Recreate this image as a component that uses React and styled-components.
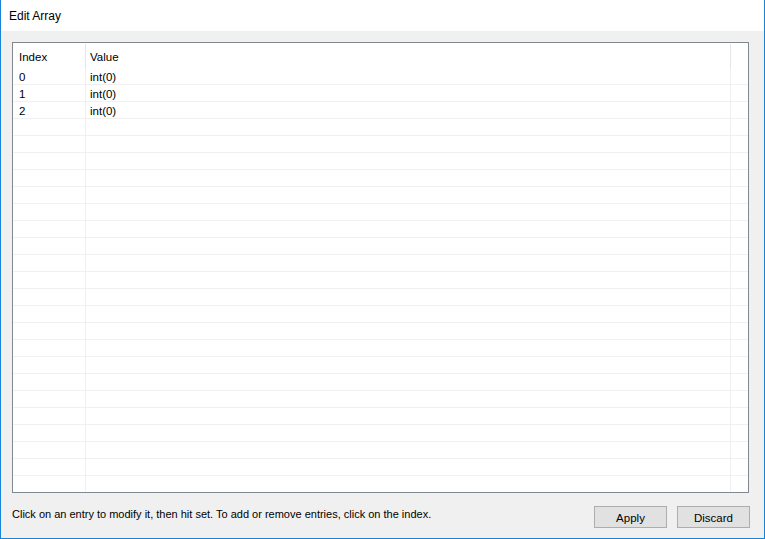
import React from 'react'
import styled, { createGlobalStyle } from 'styled-components'

const Global = createGlobalStyle`
  body {
    margin: 0;
    font-family: "Liberation Sans", Arial, sans-serif;
    font-size: 11.5px;
    color: #000;
  }
`

const Window = styled.div`
  width: 765px;
  height: 539px;
  box-sizing: border-box;
  border: 1px solid #1883d7;
  border-top: none;
  background: #f0f0f0;
  display: flex;
  flex-direction: column;
`

const TitleBar = styled.div`
  height: 31px;
  flex: none;
  background: #fff;
  display: flex;
  align-items: center;
  padding-left: 8px;
  padding-top: 1px;
  box-sizing: border-box;
  font-size: 12px;
`

const Body = styled.div`
  flex: 1;
  display: flex;
  flex-direction: column;
  padding: 11px 15px 0 11px;
  min-height: 0;
`

const Frame = styled.div`
  height: 451px;
  box-sizing: border-box;
  border: 1px solid #828790;
  background: #fff;
  overflow: hidden;
`

const Row = styled.div`
  display: flex;
  height: ${p => (p.$header ? '25px' : '17px')};
  box-sizing: border-box;
  border-bottom: ${p => (p.$header ? 'none' : '1px solid #f0f0f0')};
`

const Cell = styled.div`
  box-sizing: border-box;
  width: ${p => (p.$w ? `${p.$w}px` : 'auto')};
  flex: ${p => (p.$w ? 'none' : '1')};
  border-right: 1px solid ${p => (p.$header ? '#e5e5e5' : '#f0f0f0')};
  padding-left: ${p => p.$pad}px;
  padding-top: 1px;
  display: flex;
  align-items: center;
  margin-top: ${p => (p.$header ? '1px' : '0')};
  white-space: nowrap;
  &:last-child {
    border-right: none;
  }
`

const Footer = styled.div`
  flex: 1;
  display: flex;
  align-items: center;
  justify-content: space-between;
  padding-bottom: 2px;
`

const Hint = styled.span`
  margin-top: -1px;
  font-size: 11px;
`

const Buttons = styled.div`
  display: flex;
  gap: 10px;
  margin-top: 4px;
  margin-right: -1px;
`

const Button = styled.button`
  width: 73px;
  height: 22px;
  box-sizing: border-box;
  border: 1px solid #adadad;
  background: #e1e1e1;
  font: inherit;
  color: #000;
  padding: 2px 0 0;
`

const data = ['int(0)', 'int(0)', 'int(0)']

export default function App() {
  const rows = Array.from({ length: 26 }, (_, i) => i)
  return (
    <Window>
      <Global />
      <TitleBar>Edit Array</TitleBar>
      <Body>
        <Frame>
          <Row $header>
            <Cell $header $w={73} $pad={6}>Index</Cell>
            <Cell $header $pad={4}>Value</Cell>
            <Cell $header $w={17} />
          </Row>
          {rows.map(i => (
            <Row key={i}>
              <Cell $w={73} $pad={6}>{i < data.length ? i : ''}</Cell>
              <Cell $pad={4}>{data[i] || ''}</Cell>
              <Cell $w={17} />
            </Row>
          ))}
        </Frame>
        <Footer>
          <Hint>Click on an entry to modify it, then hit set. To add or remove entries, click on the index.</Hint>
          <Buttons>
            <Button>Apply</Button>
            <Button>Discard</Button>
          </Buttons>
        </Footer>
      </Body>
    </Window>
  )
}
